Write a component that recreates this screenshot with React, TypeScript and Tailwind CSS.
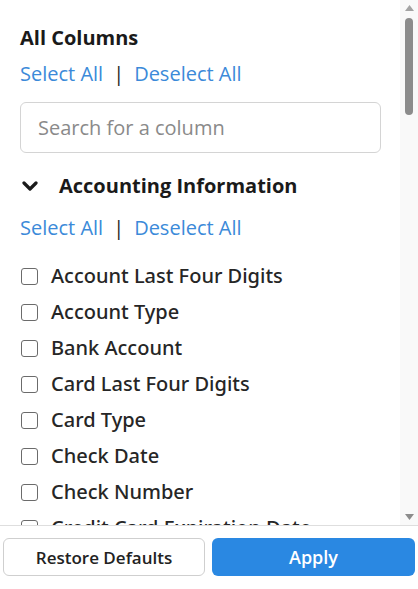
import { useState } from "react"

const columns = [
  "Account Last Four Digits",
  "Account Type",
  "Bank Account",
  "Card Last Four Digits",
  "Card Type",
  "Check Date",
  "Check Number",
  "Credit Card Expiration Date",
]

function SelectLinks() {
  return (
    <div className="flex items-center h-7 text-[20px] leading-7">
      <button className="text-[#3b8ad9]">Select All</button>
      <span className="mx-[10px] text-[#222]">|</span>
      <button className="text-[#3b8ad9]">Deselect All</button>
    </div>
  )
}

export default function App() {
  const [checked, setChecked] = useState<Record<string, boolean>>({})

  return (
    <div
      className="w-[418px] h-[589px] flex flex-col bg-white text-[#222] overflow-hidden"
      style={{ fontFamily: '"Open Sans", "Noto Sans", sans-serif' }}
    >
      <div className="flex flex-1 min-h-0">
        <div className="flex-1 overflow-hidden pl-5 pr-[19px] pt-6">
          <h2 className="text-[20px] leading-7 font-bold text-[#1a1a1a]">All Columns</h2>
          <div className="mt-[8px]">
            <SelectLinks />
          </div>
          <input
            placeholder="Search for a column"
            className="mt-[14px] w-full h-[51px] rounded-md border border-[#d4d4d4] px-[17px] text-[20px] placeholder:text-[#8a8a8a] outline-none"
          />
          <div className="mt-[19px] flex items-center h-7">
            <svg width="16" height="12" viewBox="0 0 16 12" className="ml-[2px]">
              <path d="M2 3l6 6 6-6" fill="none" stroke="#1a1a1a" strokeWidth="3.2" strokeLinecap="round" strokeLinejoin="round" />
            </svg>
            <span className="ml-[21px] text-[20px] font-bold text-[#1a1a1a]">Accounting Information</span>
          </div>
          <div className="mt-[14px]">
            <SelectLinks />
          </div>
          <ul className="mt-[16px] flex flex-col">
            {columns.map((c) => (
              <li key={c} className="h-9 flex items-center">
                <label className="flex items-center cursor-pointer">
                  <input
                    type="checkbox"
                    checked={!!checked[c]}
                    onChange={() => setChecked({ ...checked, [c]: !checked[c] })}
                    className="appearance-none w-[17px] h-[17px] ml-[1px] rounded-[3px] border-[1.5px] border-[#6b6b6b] bg-white checked:bg-[#2b88e0]"
                  />
                  <span
                    className="ml-[13px] text-[20px] font-medium text-[#262626]"
                    style={{ fontFamily: '"Noto Sans", "Open Sans", sans-serif' }}
                  >
                    {c}
                  </span>
                </label>
              </li>
            ))}
          </ul>
        </div>
        <div className="w-[18px] bg-[#f9f9f9] flex flex-col items-center">
          <svg width="9" height="6" viewBox="0 0 9 6" className="mt-[5px]">
            <path d="M0 6L4.5 0L9 6Z" fill="#a3a3a3" />
          </svg>
          <div className="mt-[7px] w-[8px] h-[97px] rounded-full bg-[#8c8c8c]" />
          <div className="flex-1" />
          <svg width="9" height="6" viewBox="0 0 9 6" className="mb-[5px]">
            <path d="M0 0L4.5 6L9 0Z" fill="#8c8c8c" />
          </svg>
        </div>
      </div>
      <div className="h-16 border-t border-[#dedede] flex gap-[7px] px-[3px] pt-[12px]">
        <button className="w-[202px] h-[38px] rounded-md border border-[#cfcfcf] bg-white text-[17px] leading-none font-semibold text-[#222]">
          Restore Defaults
        </button>
        <button className="w-[203px] h-[38px] rounded-md bg-[#2a88e2] text-[18px] leading-none font-semibold text-white">
          Apply
        </button>
      </div>
    </div>
  )
}
